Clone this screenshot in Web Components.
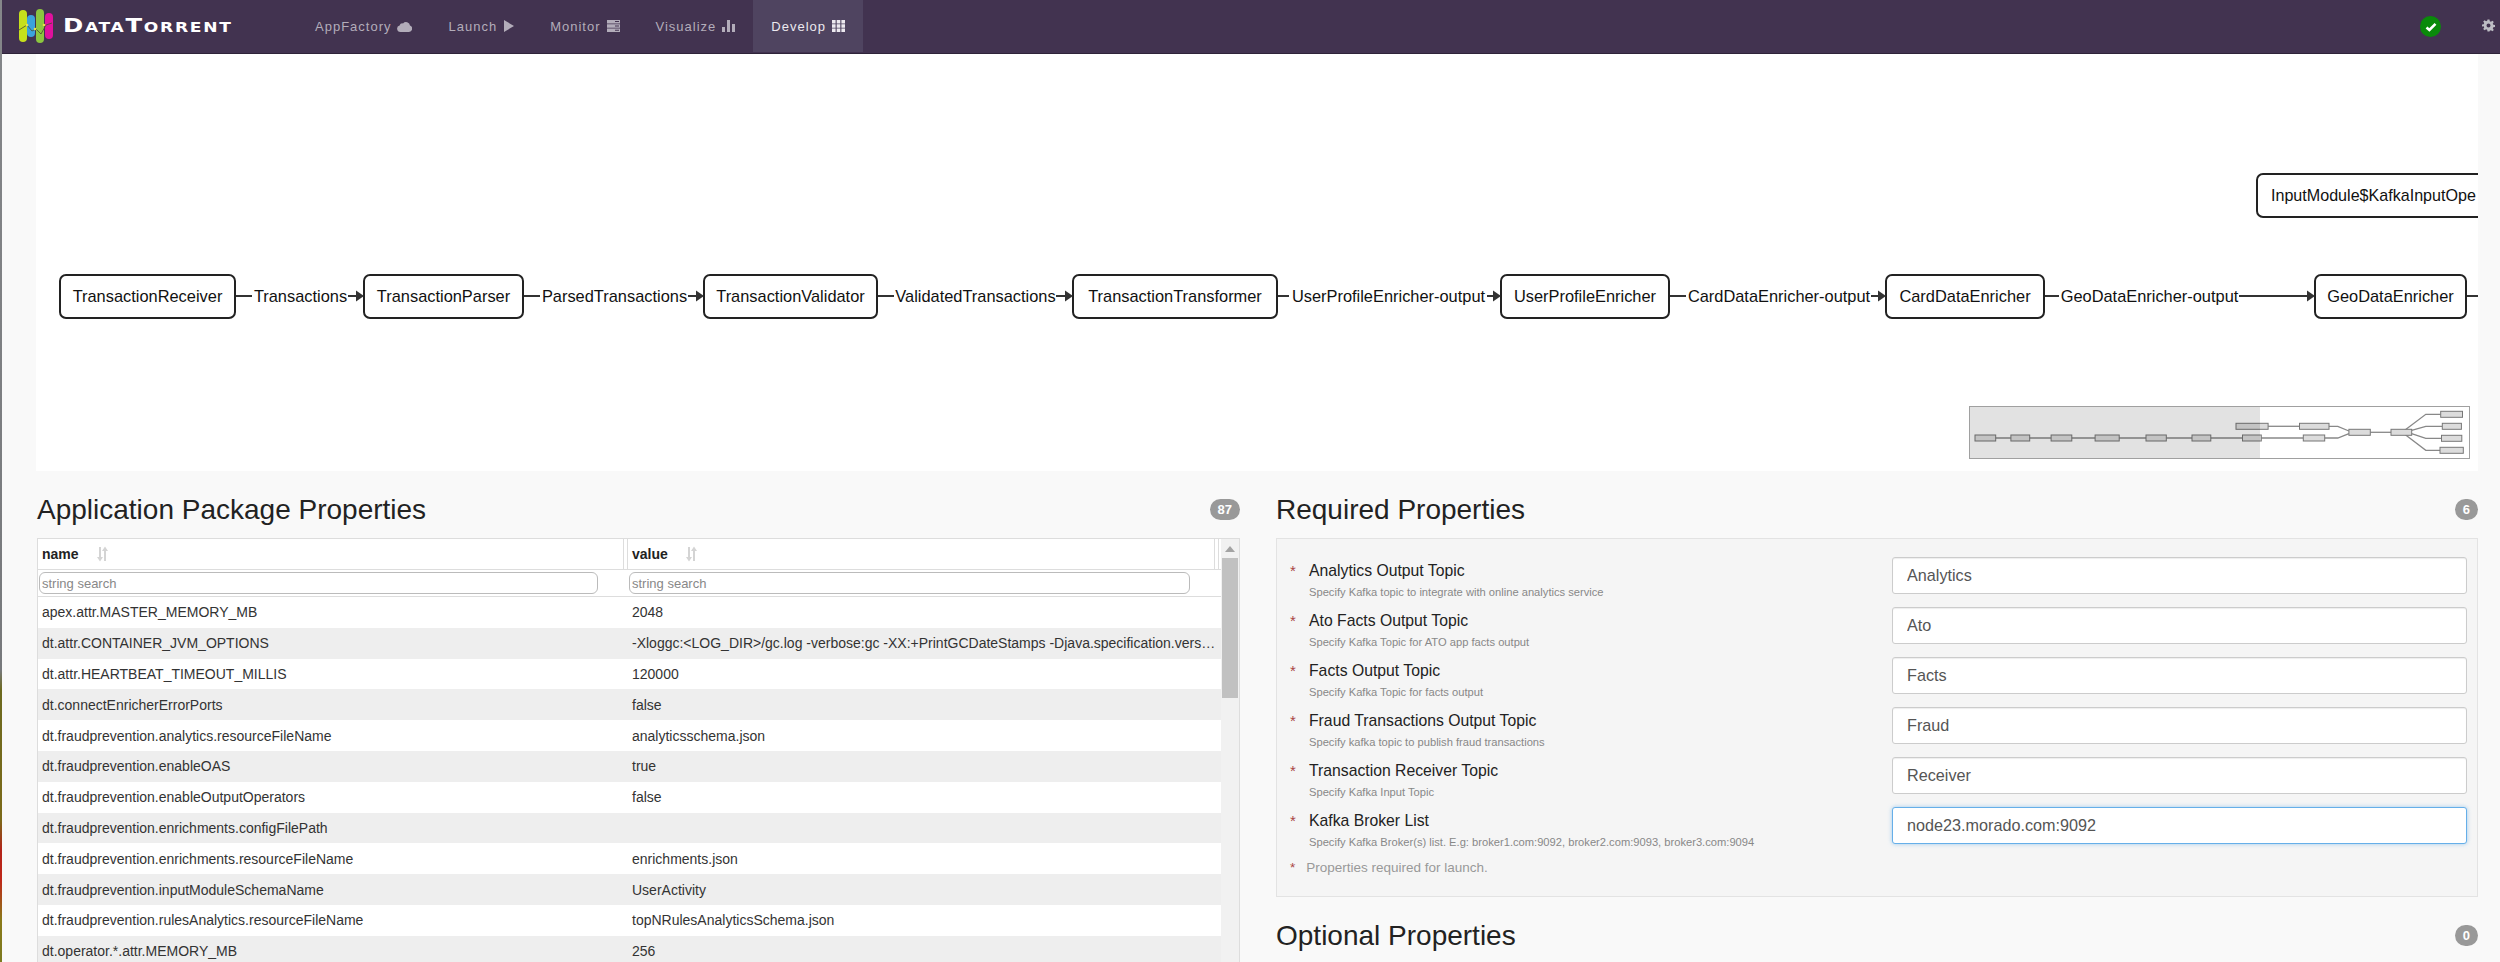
<!DOCTYPE html>
<html>
<head>
<meta charset="utf-8">
<title>DataTorrent</title>
<style>
  html,body{margin:0;padding:0;height:962px;overflow:hidden;background:#f9f9f9;}
  body{font-family:"Liberation Sans",Arial,sans-serif;color:#333;}
</style>
</head>
<body>
<dt-app>
  <dt-navbar slot="nav">
    <dt-nav-item label="AppFactory" icon="cloud"></dt-nav-item>
    <dt-nav-item label="Launch" icon="play"></dt-nav-item>
    <dt-nav-item label="Monitor" icon="server"></dt-nav-item>
    <dt-nav-item label="Visualize" icon="bars"></dt-nav-item>
    <dt-nav-item label="Develop" icon="grid" active></dt-nav-item>
  </dt-navbar>
  <dt-dag slot="dag"></dt-dag>
  <dt-section slot="left" title="Application Package Properties" count="87">
    <dt-prop-table>
      <dt-table-row name="apex.attr.MASTER_MEMORY_MB" value="2048"></dt-table-row>
      <dt-table-row name="dt.attr.CONTAINER_JVM_OPTIONS" value="-Xloggc:<LOG_DIR>/gc.log -verbose:gc -XX:+PrintGCDateStamps -Djava.specification.vers…"></dt-table-row>
      <dt-table-row name="dt.attr.HEARTBEAT_TIMEOUT_MILLIS" value="120000"></dt-table-row>
      <dt-table-row name="dt.connectEnricherErrorPorts" value="false"></dt-table-row>
      <dt-table-row name="dt.fraudprevention.analytics.resourceFileName" value="analyticsschema.json"></dt-table-row>
      <dt-table-row name="dt.fraudprevention.enableOAS" value="true"></dt-table-row>
      <dt-table-row name="dt.fraudprevention.enableOutputOperators" value="false"></dt-table-row>
      <dt-table-row name="dt.fraudprevention.enrichments.configFilePath" value=""></dt-table-row>
      <dt-table-row name="dt.fraudprevention.enrichments.resourceFileName" value="enrichments.json"></dt-table-row>
      <dt-table-row name="dt.fraudprevention.inputModuleSchemaName" value="UserActivity"></dt-table-row>
      <dt-table-row name="dt.fraudprevention.rulesAnalytics.resourceFileName" value="topNRulesAnalyticsSchema.json"></dt-table-row>
      <dt-table-row name="dt.operator.*.attr.MEMORY_MB" value="256"></dt-table-row>
    </dt-prop-table>
  </dt-section>
  <div slot="right">
    <dt-section title="Required Properties" count="6">
      <dt-required-panel>
        <dt-prop-row label="Analytics Output Topic" hint="Specify Kafka topic to integrate with online analytics service" value="Analytics"></dt-prop-row>
        <dt-prop-row label="Ato Facts Output Topic" hint="Specify Kafka Topic for ATO app facts output" value="Ato"></dt-prop-row>
        <dt-prop-row label="Facts Output Topic" hint="Specify Kafka Topic for facts output" value="Facts"></dt-prop-row>
        <dt-prop-row label="Fraud Transactions Output Topic" hint="Specify kafka topic to publish fraud transactions" value="Fraud"></dt-prop-row>
        <dt-prop-row label="Transaction Receiver Topic" hint="Specify Kafka Input Topic" value="Receiver"></dt-prop-row>
        <dt-prop-row label="Kafka Broker List" hint="Specify Kafka Broker(s) list. E.g: broker1.com:9092, broker2.com:9093, broker3.com:9094" value="node23.morado.com:9092" focused></dt-prop-row>
      </dt-required-panel>
    </dt-section>
    <dt-section title="Optional Properties" count="0"></dt-section>
  </div>
</dt-app>

<script>
const ICONS = {
  cloud:'<svg width="15" height="11" viewBox="0 0 15 11"><path fill="currentColor" d="M3.4 11A3.3 3.3 0 0 1 2.6 4.5 3 3 0 0 1 6 2.4 4 4 0 0 1 13 4.6 3.3 3.3 0 0 1 12 11z"/></svg>',
  play:'<svg style="margin-left:1px" width="10" height="12" viewBox="0 0 10 12"><path fill="currentColor" d="M0 0 10 6 0 12z"/></svg>',
  server:'<svg width="13" height="12" viewBox="0 0 13 12"><path fill="currentColor" fill-rule="evenodd" d="M0 0h13v3.4H0zM8 1v1h4V1zM0 4.3h13v3.4H0zM8 5.4v1h4v-1zM0 8.6h13V12H0zM8 9.8v1h4v-1z"/></svg>',
  bars:'<svg width="13" height="12" viewBox="0 0 13 12"><path fill="currentColor" d="M0 7h3v5H0zM5 0h3v12H5zM10 4h3v8h-3z"/></svg>',
  grid:'<svg width="13" height="12" viewBox="0 0 13 12"><path fill="currentColor" d="M0 0h3.6v3.4H0zM4.7 0h3.6v3.4H4.7zM9.4 0H13v3.4H9.4zM0 4.3h3.6v3.4H0zM4.7 4.3h3.6v3.4H4.7zM9.4 4.3H13v3.4H9.4zM0 8.6h3.6V12H0zM4.7 8.6h3.6V12H4.7zM9.4 8.6H13V12H9.4z"/></svg>'
};

class DtApp extends HTMLElement {
  constructor(){ super(); this.attachShadow({mode:"open"}); }
  connectedCallback(){
    this.shadowRoot.innerHTML = `
    <style>
      :host{display:block;height:962px;overflow:hidden;position:relative;padding-left:2px;box-sizing:border-box;}
      .edge{position:absolute;left:0;top:0;bottom:0;width:2px;background:linear-gradient(#85878a 0,#77797c 670px,#6d6a20 690px,#7c6a1a 820px,#b3241a 850px,#c0281a 880px,#8a7a1a 920px,#7c7a20 962px);z-index:2;}
      .lower{display:grid;grid-template-columns:1203px 1202px;column-gap:36px;padding-left:35px;}
      .dagwrap{padding-left:34px;padding-right:22px;}
    </style>
    <div class="edge"></div>
    <slot name="nav"></slot>
    <div class="dagwrap"><slot name="dag"></slot></div>
    <div class="lower"><slot name="left"></slot><slot name="right"></slot></div>`;
  }
}

class DtNavbar extends HTMLElement {
  constructor(){ super(); this.attachShadow({mode:"open"}); }
  connectedCallback(){
    this.shadowRoot.innerHTML = `
    <style>
      :host{display:flex;align-items:stretch;height:54px;margin-left:-2px;background:#423350;border-bottom:1px solid #2e2339;box-sizing:border-box;position:relative;}
      .brand{display:flex;align-items:center;width:297px;flex:none;box-sizing:border-box;padding-left:19px;}
      .word{display:inline-block;margin-left:10px;color:#fff;font:bold 20px "DejaVu Sans",sans-serif;font-variant:small-caps;letter-spacing:1.4px;line-height:54px;margin-top:-3px;transform:scaleX(1.22);transform-origin:0 50%;}
      .nav{display:flex;align-items:stretch;}
      .right{margin-left:auto;display:flex;align-items:center;padding-right:5px;}
      .ok{width:21px;height:21px;border-radius:50%;background:#0a8a0a;display:flex;align-items:center;justify-content:center;margin-right:41px;}
      .gear{color:#bdbdc4;display:block;margin-top:-3px;}
    </style>
    <div class="brand">
      <svg width="34" height="36" viewBox="0 0 34 36" style="flex:none">
        <rect x="0" y="1" width="8" height="32" rx="4" fill="#c6e01c"/>
        <rect x="8" y="6" width="8" height="22" rx="4" fill="#3ba3dc"/>
        <rect x="17" y="0" width="8" height="34" rx="4" fill="#8cc63f"/>
        <rect x="26" y="4" width="8" height="26" rx="4" fill="#e0119d"/>
        <polyline points="0,21 8,16 13,22 17,20 22,25 27,16 33,14" fill="none" stroke="#4a4a30" stroke-width=".8"/>
        <circle cx="8" cy="16" r="1.3" fill="#e8e04a"/><circle cx="16" cy="20" r="1.3" fill="#e8e04a"/><circle cx="25" cy="16" r="1.3" fill="#e8e04a"/>
      </svg>
      <span class="word">DataTorrent</span>
    </div>
    <div class="nav"><slot></slot></div>
    <div class="right">
      <span class="ok"><svg width="12" height="10" viewBox="0 0 12 10"><path d="M1.5 5.5 4.4 8 10.5 1.8" fill="none" stroke="#fff" stroke-width="2.6"/></svg></span>
      <svg class="gear" width="13" height="13" viewBox="-1 0 26 24"><path fill="currentColor" fill-rule="evenodd" d="M10 0h4l.6 3.400 2.300 1 2.900-2 2.800 2.800-2 2.900 1 2.300 3.400.6v4l-3.400.6-1 2.300 2 2.900-2.800 2.800-2.900-2-2.300 1L14 24h-4l-.6-3.400-2.300-1-2.900 2-2.800-2.800 2-2.900-1-2.300L-1 14v-4l3.400-.6 1-2.300-2-2.900 2.800-2.800 2.900 2 2.300-1zM12 8a4 4 0 1 0 0 8 4 4 0 0 0 0-8z"/></svg>
    </div>`;
  }
}

class DtNavItem extends HTMLElement {
  constructor(){ super(); this.attachShadow({mode:"open"}); }
  connectedCallback(){
    this.shadowRoot.innerHTML = `
    <style>
      :host{display:flex;align-items:center;gap:6px;padding:0 18px;color:#b3adba;font:13px "Liberation Sans",sans-serif;letter-spacing:1px;margin-bottom:1px;}
      :host([active]){background:#4f4460;color:#ece9ef;}
      svg{display:block;}
    </style>
    <span>${this.getAttribute("label")}</span>${ICONS[this.getAttribute("icon")]}`;
  }
}

// page coordinates, viewBox of the svg starts at 36,54
const NODES = [
  ["TransactionReceiver",60,235],["TransactionParser",364,523],["TransactionValidator",704,877],
  ["TransactionTransformer",1073,1277],["UserProfileEnricher",1501,1669],["CardDataEnricher",1886,2044],["GeoDataEnricher",2315,2466]
];
const EDGES = [
  ["Transactions",235,254,347,364],["ParsedTransactions",523,542,687,704],["ValidatedTransactions",877,896,1055,1073],
  ["UserProfileEnricher-output",1277,1291,1486,1501],["CardDataEnricher-output",1669,1688,1870,1886],["GeoDataEnricher-output",2044,2061,2238,2315]
];

class DtDag extends HTMLElement {
  constructor(){ super(); this.attachShadow({mode:"open"}); }
  connectedCallback(){
    let body = "";
    NODES.forEach(([t,a,b])=>{
      body += `<rect class="n" x="${a}" y="275" width="${b-a}" height="43" rx="6"/><text x="${(a+b)/2}" y="302" text-anchor="middle">${t}</text>`;
    });
    EDGES.forEach(([t,a,s,e,b])=>{
      body += `<path class="l" d="M${a+1} 296H${s-2}M${e+1} 296H${b-6}"/><path class="h" d="M${b-8} 290.5 ${b} 296 ${b-8} 301.500z"/>`;
      body += `<text x="${(s+e)/2}" y="302" text-anchor="middle">${t}</text>`;
    });
    body += `<path class="l" d="M2467 296H2480"/>`;
    body += `<rect class="n" x="2257" y="174" width="300" height="43" rx="6"/><text class="clip" x="2271" y="201">InputModule$KafkaInputOpe</text>`;
    this.shadowRoot.innerHTML = `
    <style>
      :host{display:block;height:417px;background:#fff;position:relative;overflow:hidden;}
      svg{display:block;}
      text{font:16.4px "Liberation Sans",sans-serif;fill:#111;}
      text.clip{font-size:16.1px;}
      .n{fill:#fff;stroke:#222;stroke-width:2;}
      .l{fill:none;stroke:#333;stroke-width:2;}
      .h{fill:#333;}
      dt-minimap{position:absolute;left:1933px;top:352px;}
    </style>
    <svg width="2442" height="417" viewBox="36 54 2442 417">${body}</svg>
    <dt-minimap></dt-minimap>`;
  }
}

// minimap geometry read off a crop that was 2.613x wide, 3x tall
class DtMinimap extends HTMLElement {
  constructor(){ super(); this.attachShadow({mode:"open"}); }
  connectedCallback(){
    const X = v => ((v-184)/2.613).toFixed(1), Y = v => ((v-80)/3).toFixed(1);
    const boxes = [
      [197,251,173],[291,340,173],[396,450,173],[511,574,173],[644,697,173],[764,813,173],[896,945,173],[1055,1111,173],
      [879,963,138],[1045,1122,138],[1174,1230,156],[1284,1338,156],
      [1414,1471,102],[1418,1468,138],[1416,1469,174],[1412,1473,210]
    ];
    const lines = [
      [[197,173],[1055,173]],[[1111,173],[1145,173],[1174,160]],[[963,138],[1045,138]],[[1122,138],[1145,138],[1174,152]],
      [[1230,156],[1284,156]],[[1320,150],[1375,102],[1414,102]],[[1338,150],[1375,138],[1418,138]],
      [[1338,160],[1375,174],[1416,174]],[[1320,162],[1375,210],[1412,210]]
    ];
    let s = "";
    lines.forEach(p=>{ s += `<polyline points="${p.map(q=>X(q[0])+","+Y(q[1])).join(" ")}"/>`; });
    boxes.forEach(([a,b,y])=>{ s += `<rect x="${X(a)}" y="${(Y(y)-3).toFixed(1)}" width="${((b-a)/2.613).toFixed(1)}" height="6"/>`; });
    this.shadowRoot.innerHTML = `
    <style>
      :host{display:block;box-sizing:border-box;width:501px;height:53px;border:1px solid #a0a0a0;background:#fff;}
      svg{display:block;}
      polyline{fill:none;stroke:#888;stroke-width:1.3;}
      rect{fill:#dcdcdc;stroke:#777;stroke-width:1;}
      .shade{fill:rgba(0,0,0,.115);stroke:none;}
    </style>
    <svg width="499" height="51">${s}<rect class="shade" x="0" y="0" width="290" height="51"/></svg>`;
  }
}

class DtSection extends HTMLElement {
  constructor(){ super(); this.attachShadow({mode:"open"}); }
  connectedCallback(){
    this.shadowRoot.innerHTML = `
    <style>
      :host{display:block;padding-top:22px;}
      .head{display:flex;align-items:center;justify-content:space-between;height:34px;margin-bottom:11px;}
      h3{margin:0;font:400 28px/34px "Liberation Sans",sans-serif;color:#222;}
      .badge{background:#999;color:#fff;font:bold 13px/21px "Liberation Sans",sans-serif;height:21px;min-width:7px;padding:0 8px;border-radius:11px;text-align:center;margin-top:-1px;}
    </style>
    <div class="head"><h3>${this.getAttribute("title")}</h3><span class="badge">${this.getAttribute("count")}</span></div>
    <slot></slot>`;
  }
}

const SORT = '<svg width="11" height="16" viewBox="0 0 11 16"><path fill="none" stroke="#d4d4d4" stroke-width="2" d="M3 1v13M8 15V2"/><path fill="#d4d4d4" d="M0 11h6l-3 4.500zM5 5h6L8 .5z"/></svg>';

class DtPropTable extends HTMLElement {
  constructor(){ super(); this.attachShadow({mode:"open"}); }
  connectedCallback(){
    this.shadowRoot.innerHTML = `
    <style>
      :host{display:flex;border:1px solid #ddd;border-bottom:0;background:#fff;height:480px;font:14px "Liberation Sans",sans-serif;color:#333;}
      .main{width:1183px;flex:none;}
      .hd{display:grid;grid-template-columns:585px 5px 586px 5px;height:30px;border-bottom:1px solid #ddd;}
      .hd div{display:flex;align-items:center;gap:18px;font-weight:bold;color:#222;padding-left:4px;}
      .hd i{display:block;border-left:1px solid #ddd;border-right:1px solid #ddd;}
      .search{display:grid;grid-template-columns:590px 1fr;height:26px;border-bottom:1px solid #ddd;}
      input{box-sizing:border-box;height:22px;margin:2px 0 0 1px;border:1px solid #bbb;border-radius:6px;font:13px "Liberation Sans",sans-serif;padding:0 2px;background:#fff;outline:0;}
      input::placeholder{color:#888;}
      .a{width:559px;}
      .b{width:561px;margin-left:1px;}
      .bar{flex:1;background:#f1f1f1;position:relative;padding:0 1px;}
      .arrow{height:19px;display:flex;align-items:center;justify-content:center;}
      .arrow:before{content:"";border:5px solid transparent;border-top:0;border-bottom:6px solid #a3a3a3;}
      .thumb{height:140px;background:#c1c1c1;}
    </style>
    <div class="main">
      <div class="hd"><div>name ${SORT}</div><i></i><div>value ${SORT}</div><i></i></div>
      <div class="search"><div><input class="a" placeholder="string search"></div><div><input class="b" placeholder="string search"></div></div>
      <slot></slot>
    </div>
    <div class="bar"><div class="arrow"></div><div class="thumb"></div></div>`;
  }
}

class DtTableRow extends HTMLElement {
  constructor(){ super(); this.attachShadow({mode:"open"}); }
  connectedCallback(){
    const esc = s => s.replace(/</g,"&lt;");
    this.shadowRoot.innerHTML = `
    <style>
      :host{display:grid;grid-template-columns:590px 593px;height:30.8px;align-items:center;background:#fff;}
      :host(:nth-child(even)){background:#eee;}
      div{padding-left:4px;white-space:nowrap;overflow:hidden;text-overflow:ellipsis;box-sizing:border-box;}
    </style>
    <div>${esc(this.getAttribute("name"))}</div><div>${esc(this.getAttribute("value"))}</div>`;
  }
}

class DtRequiredPanel extends HTMLElement {
  constructor(){ super(); this.attachShadow({mode:"open"}); }
  connectedCallback(){
    this.shadowRoot.innerHTML = `
    <style>
      :host{display:block;box-sizing:border-box;height:359px;background:#f5f5f5;border:1px solid #e3e3e3;padding:18px 10px 0 13px;}
      .note{margin-top:1px;color:#999;font:13.5px/20px "Liberation Sans",sans-serif;}
      .note b{font-weight:400;color:#a94442;margin-right:11px;}
    </style>
    <slot></slot>
    <div class="note"><b>*</b>Properties required for launch.</div>`;
  }
}

class DtPropRow extends HTMLElement {
  constructor(){ super(); this.attachShadow({mode:"open"}); }
  connectedCallback(){
    const focus = this.hasAttribute("focused");
    this.shadowRoot.innerHTML = `
    <style>
      :host{display:grid;grid-template-columns:19px 583px 575px;height:50px;font-family:"Liberation Sans",sans-serif;}
      .star{color:#a94442;font-size:15px;line-height:24px;padding-top:2px;}
      .lab{font-size:15.75px;line-height:20px;color:#222;padding-top:4px;}
      .hint{font-size:11.17px;line-height:14px;color:#888;margin-top:4px;}
      input{box-sizing:border-box;width:575px;height:37px;border:1px solid ${focus?"#66afe9":"#ccc"};border-radius:3px;background:#fff;padding:0 14px;font:16.2px "Liberation Sans",sans-serif;color:#555;outline:0;${focus?"box-shadow:0 0 4px rgba(102,175,233,.6);":"box-shadow:inset 0 1px 1px rgba(0,0,0,.07);"}}
    </style>
    <div class="star">*</div>
    <div><div class="lab">${this.getAttribute("label")}</div><div class="hint">${this.getAttribute("hint")}</div></div>
    <div><input value="${this.getAttribute("value")}"></div>`;
  }
}

customElements.define("dt-app",DtApp);
customElements.define("dt-navbar",DtNavbar);
customElements.define("dt-nav-item",DtNavItem);
customElements.define("dt-minimap",DtMinimap);
customElements.define("dt-dag",DtDag);
customElements.define("dt-section",DtSection);
customElements.define("dt-prop-table",DtPropTable);
customElements.define("dt-table-row",DtTableRow);
customElements.define("dt-required-panel",DtRequiredPanel);
customElements.define("dt-prop-row",DtPropRow);
</script>
</body>
</html>
